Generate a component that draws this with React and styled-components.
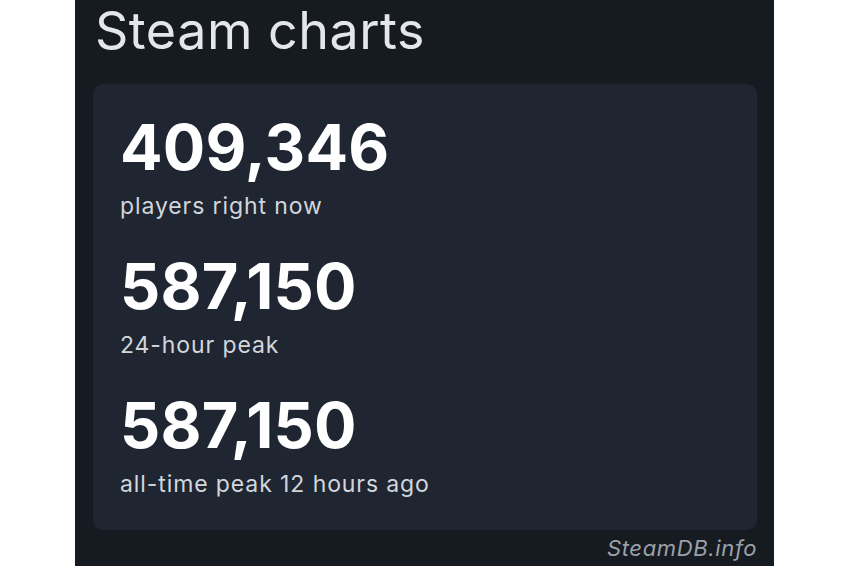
import React from "react";
import styled, { createGlobalStyle } from "styled-components";

const Global = createGlobalStyle`
  html, body { margin: 0; padding: 0; background: #ffffff; }
  body { font-family: Inter, "Noto Sans", sans-serif; }
`;

const Page = styled.div`
  width: 850px;
  height: 566px;
  display: flex;
  background: #ffffff;
  overflow: hidden;
`;

const Panel = styled.div`
  margin-left: 75px;
  width: 699px;
  height: 566px;
  background: #161a21;
  display: flex;
  flex-direction: column;
  padding: 0 17px 0 18px;
  box-sizing: border-box;
`;

const Title = styled.h1`
  margin: 0;
  padding: 0 0 0 2px;
  height: 84px;
  font-family: Inter, sans-serif;
  font-weight: 400;
  font-size: 52px;
  line-height: 62px;
  color: #e4e6e9;
  letter-spacing: 0.5px;
  box-sizing: border-box;
`;

const Card = styled.div`
  background: #1f2631;
  border-radius: 10px;
  height: 446px;
  padding: 32px 27px 0 27px;
  box-sizing: border-box;
  display: flex;
  flex-direction: column;
  gap: 35px;
`;

const Stat = styled.div`
  display: flex;
  flex-direction: column;
`;

const Value = styled.div`
  font-family: Inter, sans-serif;
  font-weight: 700;
  font-size: 63px;
  line-height: 63px;
  color: #ffffff;
  letter-spacing: 0.2px;
`;

const Label = styled.div`
  font-family: Inter, sans-serif;
  font-weight: 400;
  font-size: 23px;
  line-height: 28px;
  color: #d2d6dc;
  letter-spacing: 0.9px;
  margin-top: 13px;
`;

const Footer = styled.div`
  text-align: right;
  font-family: Inter, sans-serif;
  font-style: italic;
  font-size: 22px;
  line-height: 36px;
  color: #9ca1a9;
  letter-spacing: 0.65px;
`;

const stats = [
  { value: "409,346", label: "players right now" },
  { value: "587,150", label: "24-hour peak" },
  { value: "587,150", label: "all-time peak 12 hours ago" },
];

export default function App() {
  return (
    <>
      <Global />
      <Page>
        <Panel>
          <Title>Steam charts</Title>
          <Card>
            {stats.map((s, i) => (
              <Stat key={i}>
                <Value>{s.value}</Value>
                <Label>{s.label}</Label>
              </Stat>
            ))}
          </Card>
          <Footer>SteamDB.info</Footer>
        </Panel>
      </Page>
    </>
  );
}
